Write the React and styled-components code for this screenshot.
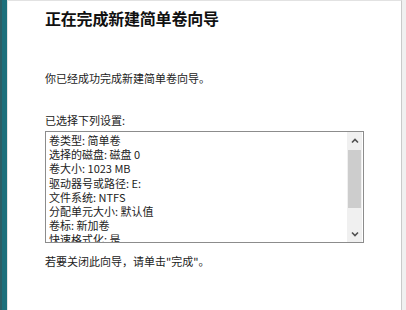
import React from "react"
import styled, { createGlobalStyle } from "styled-components"

const GlobalStyle = createGlobalStyle`
  html, body {
    margin: 0;
    padding: 0;
    background: #ffffff;
  }
  body {
    width: 406px;
    height: 310px;
    overflow: hidden;
    font-family: "Noto Sans CJK SC", "Liberation Sans", sans-serif;
    color: #1e1e1e;
  }
`

const Frame = styled.div`
  display: flex;
  width: 406px;
  height: 310px;
  background: #f0f0f0;
`

const Sidebar = styled.div`
  flex: 0 0 7px;
  background: linear-gradient(to right, #2c5d64 0, #2c5d64 2px, #1c6f7b 2px);
  border-right: 1px solid #e4e4e4;
`

const Main = styled.div`
  flex: 0 0 394px;
  box-sizing: border-box;
  border-top: 1px solid #e2e2e2;
  border-right: 1px solid #c9c9c9;
  background: #ffffff;
  padding: 7px 0 0 37px;
  display: flex;
  flex-direction: column;
  align-items: flex-start;
`

const Title = styled.h1`
  margin: 0;
  font-size: 16px;
  line-height: 20px;
  font-weight: 700;
  color: #111;
  letter-spacing: -0.2px;
`

const Text = styled.p`
  margin: ${(p) => p.$top}px 0 0;
  font-size: 11px;
  line-height: 16px;
  color: #222;
`

const ListBox = styled.div`
  margin-top: 3px;
  width: 319px;
  height: 112px;
  box-sizing: border-box;
  border: 1px solid #8c8c8c;
  display: flex;
  background: #fff;
`

const Lines = styled.div`
  flex: 1;
  overflow: hidden;
  padding: 1px 0 0 3px;
  font-size: 11px;
  line-height: 14.2px;
  color: #222;
  white-space: nowrap;
`

const ScrollBar = styled.div`
  flex: 0 0 15px;
  margin-right: 1px;
  background: #f0f0f0;
  display: flex;
  flex-direction: column;
`

const Arrow = styled.div`
  flex: 0 0 17px;
  display: flex;
  align-items: center;
  justify-content: center;
`

const Thumb = styled.div`
  flex: 0 0 58px;
  margin: 1px 1px 0;
  background: #cdcdcd;
`

const Track = styled.div`
  flex: 1;
`

const Chevron = ({ down }) => (
  <svg width="8" height="6" viewBox="0 0 8 6">
    <path
      d={down ? "M1 1.5 L4 4.5 L7 1.5" : "M1 4.5 L4 1.5 L7 4.5"}
      fill="none"
      stroke="#505050"
      strokeWidth="1.6"
    />
  </svg>
)

const settings = [
  "卷类型: 简单卷",
  "选择的磁盘: 磁盘 0",
  "卷大小: 1023 MB",
  "驱动器号或路径: E:",
  "文件系统: NTFS",
  "分配单元大小: 默认值",
  "卷标: 新加卷",
  "快速格式化: 是",
]

const App = () => {
  return (
    <>
      <GlobalStyle />
      <Frame>
        <Sidebar />
        <Main>
          <Title>正在完成新建简单卷向导</Title>
          <Text $top={42}>你已经成功完成新建简单卷向导。</Text>
          <Text $top={26}>已选择下列设置:</Text>
          <ListBox>
            <Lines>
              {settings.map((s) => (
                <div key={s}>{s}</div>
              ))}
            </Lines>
            <ScrollBar>
              <Arrow>
                <Chevron />
              </Arrow>
              <Thumb />
              <Track />
              <Arrow>
                <Chevron down />
              </Arrow>
            </ScrollBar>
          </ListBox>
          <Text $top={10}>若要关闭此向导，请单击"完成"。</Text>
        </Main>
      </Frame>
    </>
  )
}

export default App
